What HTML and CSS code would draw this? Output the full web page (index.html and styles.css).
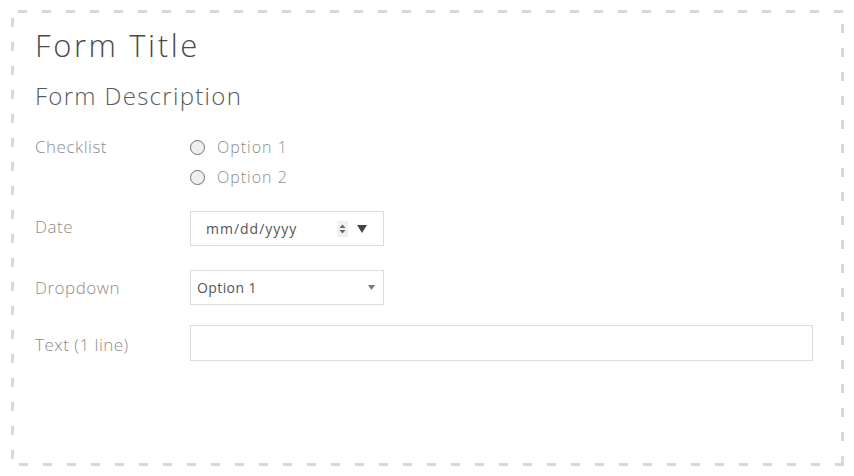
FILE: index.html
```html
<!DOCTYPE html>
<html>
<head>
<meta charset="utf-8">
<link rel="stylesheet" href="styles.css">
</head>
<body>
<div class="form">
  <h1 class="title">Form Title</h1>
  <p class="desc">Form Description</p>

  <div class="row row-check">
    <div class="label">Checklist</div>
    <div class="options">
      <div class="option"><span class="radio"></span><span>Option 1</span></div>
      <div class="option"><span class="radio"></span><span>Option 2</span></div>
    </div>
  </div>

  <div class="row row-date">
    <div class="label label-date">Date</div>
    <div class="field date">
      <span class="date-text">mm/dd/yyyy</span>
      <span class="spin">
        <svg width="7" height="10" viewBox="0 0 7 10"><path d="M3.5 0.5L6.5 4H0.5Z M3.5 9.5L6.5 6H0.5Z" fill="#666"/></svg>
      </span>
      <svg class="caret" width="10" height="8" viewBox="0 0 10 8"><path d="M0 0H10L5 8Z" fill="#444"/></svg>
    </div>
  </div>

  <div class="row row-select">
    <div class="label">Dropdown</div>
    <div class="field select">
      <span>Option 1</span>
      <svg class="sel-caret" width="7" height="5" viewBox="0 0 7 5"><path d="M0 0H7L3.5 5Z" fill="#777"/></svg>
    </div>
  </div>

  <div class="row row-text">
    <div class="label label-text">Text (1 line)</div>
    <div class="field text"></div>
  </div>
</div>
</body>
</html>
```

FILE: styles.css
```css
html, body {
  margin: 0;
  padding: 0;
  background: #fff;
}

body {
  font-family: "Open Sans", "Liberation Sans", sans-serif;
}

.form {
  box-sizing: border-box;
  width: 833px;
  height: 456px;
  margin: 10px 0 0 11px;
  padding: 15px 31px 0 24px;
  background-image:
    linear-gradient(to right, #d8d8d8 0 9px, transparent 9px),
    linear-gradient(to right, #d8d8d8 0 9px, transparent 9px),
    linear-gradient(to bottom, #d8d8d8 0 9px, transparent 9px),
    linear-gradient(to bottom, #d8d8d8 0 9px, transparent 9px);
  background-size: 24px 3px, 24px 3px, 3px 24px, 3px 24px;
  background-repeat: repeat-x, repeat-x, repeat-y, repeat-y;
  background-position: 7px 0, 8px 100%, 0 8px, 100% 14px;
}

.title {
  margin: 0;
  font-size: 31px;
  font-weight: 300;
  letter-spacing: 2.6px;
  line-height: 40px;
  color: #4a4a4a;
}

.desc {
  margin: 15px 0 0;
  font-size: 24px;
  font-weight: 300;
  letter-spacing: 1.3px;
  line-height: 32px;
  color: #5a5a5a;
}

.row {
  display: grid;
  grid-template-columns: 155px 1fr;
  align-items: center;
}

.label {
  font-size: 17px;
  font-weight: 300;
  letter-spacing: 0.5px;
  color: #8c8c8c;
  line-height: 22px;
}

.label-date {
  margin-bottom: 4px;
}

.label-text {
  margin-top: 3px;
}

.row-check {
  margin-top: 20px;
  align-items: start;
}

.row-check .label {
  line-height: 30px;
}

.options {
  display: flex;
  flex-direction: column;
}

.option {
  display: flex;
  align-items: center;
  height: 30px;
  font-size: 16px;
  font-weight: 300;
  letter-spacing: 1px;
  color: #8c8c8c;
  gap: 12px;
}

.radio {
  box-sizing: border-box;
  width: 15px;
  height: 15px;
  border: 1px solid #707070;
  border-radius: 50%;
  background: #efefef;
  margin-top: 1px;
}

.field {
  box-sizing: border-box;
  height: 35px;
  border: 1px solid #dcdcdc;
  background: #fff;
  display: flex;
  align-items: center;
  font-size: 14px;
  font-weight: 400;
  color: #555;
}

.row-date {
  margin-top: 19px;
}

.date {
  width: 194px;
  padding-left: 15px;
}

.date-text {
  width: 131px;
  letter-spacing: 1px;
}

.spin {
  width: 11px;
  height: 16px;
  background: #f0f0f0;
  display: flex;
  align-items: center;
  justify-content: center;
}

.caret {
  margin-left: 9px;
}

.row-select {
  margin-top: 24px;
}

.select {
  width: 194px;
  padding: 0 8px 0 6px;
  justify-content: space-between;
  letter-spacing: 0.4px;
}

.row-text {
  margin-top: 20px;
}

.text {
  height: 36px;
  width: 100%;
}
```
